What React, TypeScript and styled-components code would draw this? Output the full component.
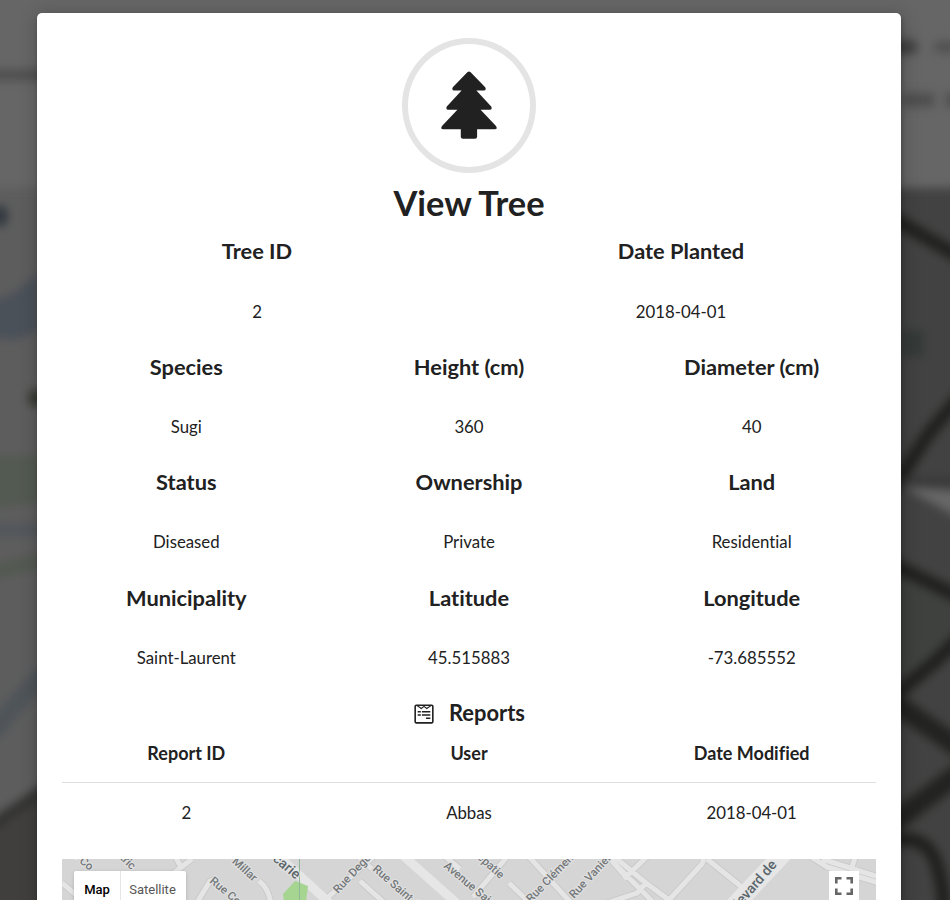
import React from "react";
import styled, { createGlobalStyle } from "styled-components";
import { FaWpforms } from "react-icons/fa";

const GlobalStyle = createGlobalStyle`
  html, body { margin: 0; height: 100%; overflow: hidden; }
  body {
    background: #5c5c5c;
    font-family: Lato, "Liberation Sans", sans-serif;
    font-variant-ligatures: none;
    color: #212121;
  }
  * { box-sizing: border-box; }
`;

const Page = styled.div`
  position: relative;
  width: 950px;
  height: 900px;
  overflow: hidden;
  padding: 13px 0 0 37px;
`;

const Backdrop = styled.svg`
  position: absolute;
  inset: 0;
`;

const Modal = styled.main`
  position: relative;
  width: 864px;
  height: 1000px;
  padding: 25px;
  background: #fff;
  border-radius: 5px;
  box-shadow: 1px 3px 4px rgba(0, 0, 0, 0.2), 1px 3px 18px 2px rgba(0, 0, 0, 0.2);
  display: flex;
  flex-direction: column;
`;

const TreeBadge = styled.div`
  align-self: center;
  flex: none;
  width: 134.4px;
  height: 135px;
  padding-bottom: 1px;
  border: 6px solid #e4e4e4;
  border-radius: 50%;
  display: flex;
  align-items: center;
  justify-content: center;
`;

const Title = styled.h1`
  margin: 0;
  flex: none;
  height: 62px;
  line-height: 60px;
  text-align: center;
  font-size: 34.4px;
  font-weight: 700;
`;

const Row = styled.section<{ $columns: number; $height: number }>`
  display: grid;
  grid-template-columns: repeat(${(p) => p.$columns}, 1fr);
  flex: none;
  height: ${(p) => p.$height}px;
  margin: 0 -17px;
  text-align: center;
`;

const Heading = styled.h2`
  margin: 0;
  height: 34px;
  line-height: 32px;
  font-size: 21.8px;
  font-weight: 700;
`;

const Value = styled.p<{ $gap: number }>`
  margin: ${(p) => p.$gap}px 0 0;
  height: 34px;
  line-height: 34px;
  font-size: 16.8px;
`;

const ReportsTitle = styled.h2`
  margin: 0;
  height: 34px;
  flex: none;
  display: flex;
  align-items: center;
  justify-content: center;
  gap: 14px;
  line-height: 26px;
  font-size: 21.9px;
  font-weight: 700;
  span { padding-bottom: 2px; }
`;

const ReportRow = styled(Row)`
  align-items: center;
  font-size: 16.8px;
`;

const ReportHead = styled(ReportRow)`
  font-size: 18px;
  font-weight: 700;
`;

const Divider = styled.hr`
  width: 100%;
  margin: 7px 0 0;
  border: 0;
  border-top: 1px solid #dedede;
`;

const MapPanel = styled.div`
  position: relative;
  flex: none;
  height: 150px;
  margin-top: 17px;
  background: #d5d5d5;
  overflow: hidden;
`;

const MapTypes = styled.div`
  position: absolute;
  left: 12px;
  top: 12px;
  display: flex;
  height: 36px;
  background: #fff;
  border-radius: 2px;
  box-shadow: 0 1px 4px -1px rgba(0, 0, 0, 0.3);
`;

const MapType = styled.button<{ $active?: boolean }>`
  width: ${(p) => (p.$active ? 46 : 66)}px;
  padding: 0 ${(p) => (p.$active ? 0 : 2)}px 0 0;
  border: 0;
  border-left: ${(p) => (p.$active ? "0" : "1px solid #e6e6e6")};
  background: transparent;
  color: ${(p) => (p.$active ? "#000" : "#565656")};
  font: ${(p) => (p.$active ? 500 : 400)} 13px Roboto, sans-serif;
`;

const Fullscreen = styled.button`
  position: absolute;
  right: 17px;
  top: 12px;
  width: 30px;
  height: 30px;
  padding: 6px;
  border: 0;
  background: #fff;
  svg { display: block; }
`;

const rows: [string, string][][] = [
  [["Tree ID", "2"], ["Date Planted", "2018-04-01"]],
  [["Species", "Sugi"], ["Height (cm)", "360"], ["Diameter (cm)", "40"]],
  [["Status", "Diseased"], ["Ownership", "Private"], ["Land", "Residential"]],
  [["Municipality", "Saint-Laurent"], ["Latitude", "45.515883"], ["Longitude", "-73.685552"]],
];
const rowHeights = [116, 115, 116, 115];

function BlurredPage() {
  return (
    <Backdrop width="950" height="900" viewBox="0 0 950 900">
      <defs>
        <filter id="soft" x="-20%" y="-20%" width="140%" height="140%" colorInterpolationFilters="sRGB">
          <feGaussianBlur stdDeviation="5" />
        </filter>
      </defs>
      <rect width="950" height="900" fill="#666" />
      <g filter="url(#soft)">
        <rect x="-30" y="188" width="500" height="750" fill="#5d5d5d" />
        <rect x="480" y="188" width="500" height="750" fill="#424242" />
        <path d="M-20 75H60" stroke="#4d4d4d" strokeWidth="10" />
        <ellipse cx="0" cy="216" rx="8" ry="11" fill="#30383f" />
        <path d="M-20 305L10 295L40 272V330L18 340L-20 338Z" fill="#4b5159" />
        <circle cx="37" cy="398" r="9" fill="#34382f" />
        <path d="M-20 458L45 454V502L-20 510Z" fill="#535a51" />
        <path d="M-20 530H45" stroke="#52565b" strokeWidth="12" />
        <path d="M-20 575L45 560" stroke="#535951" strokeWidth="16" />
        <path d="M45 672L15 705L-10 735" stroke="#4e5459" strokeWidth="18" fill="none" />
        <path d="M-30 842L50 785V930H-30Z" fill="#403f3e" />
        <path d="M-20 833L50 785" stroke="#30302f" strokeWidth="10" />
        <ellipse cx="905" cy="47" rx="13" ry="8" fill="#404040" />
        <ellipse cx="946" cy="47" rx="13" ry="6" fill="#505050" />
        <path d="M902 100H934M946 100H965" stroke="#4e4e4e" strokeWidth="14" />
        <rect x="901" y="330" width="23" height="27" fill="#343a37" />
        <path d="M895 566L970 600V650L895 675Z" fill="#3e413d" />
        <path d="M880 211L970 263M970 385L930 432L890 492M880 558L970 602M970 628L935 662L895 695M895 840Q925 835 935 860T945 930" stroke="#1f1f1d" strokeWidth="13" fill="none" />
        <path d="M890 700L970 755M970 765L930 795L890 825" stroke="#222220" strokeWidth="20" fill="none" />
        <path d="M890 481H970" stroke="#333" strokeWidth="5" />
        <path d="M903 487L970 492V524Z" fill="#676767" />
      </g>
    </Backdrop>
  );
}

function TreeIcon() {
  return (
    <svg width="56" height="68" viewBox="0 0 56 68" fill="#212121">
      <path d="M26.6 1Q28 -.2 29.4 1L44.2 16.2Q45.8 19.6 42.5 19.6H35.4L50.2 35.5Q51.7 38.8 48.5 38.8H39.6L55 54.9Q57 58.2 53.7 58.2H36.1V65.7Q36.1 67.8 34 67.8H21.9Q19.8 67.8 19.8 65.7V58.2H2.3Q-1 58.2 1 54.9L16.4 38.8H7.5Q4.3 38.8 5.8 35.5L20.6 19.6H13.5Q10.2 19.6 11.8 16.2Z" />
    </svg>
  );
}

const roads =
  "M0 24L20 41M67 48L130 0M110 -8L119 8M125 60L148 22L154 20M197 22Q208 30 209 48M265 39L320 -10M298 22L327 48M310 10L290 -8M362 -20L398 10M411 38L450 -8M447 24L472 48M460 -10L510 45M538 -10L590 42M544 -5L564 18M562 20L601 -18M508 -20L530 -5M584 24L549 -5M584 24L607 41L640 5Q643 0 638 -6M584 24L575 34L545 44M645 0L681 29M746 -4L765 8L820 25M760 0L820 19M790 8L795 -7";

const streets: [number, number, number, string][] = [
  [5, -7, 40, "ue Co"],
  [53, -5, 45, "atric"],
  [163, -3, 43, "e Millar"],
  [147, 23, 40, "Rue Cous"],
  [276, 35, -47, "Rue Degui"],
  [310, 11, 41, "Rue Saint-G"],
  [381, 8, 40, "Avenue Saint"],
  [409, -6, 42, "Depatie"],
  [469, 44, -46, "Rue Clément"],
  [512, 40, -47, "Rue Vanier"],
];

function MapDrawing() {
  return (
    <svg width="814" height="60" viewBox="0 0 814 60">
      <g fill="none" strokeLinejoin="round">
        <path d={roads} stroke="#cacaca" strokeWidth="7" />
        <path d={roads} stroke="#e5e5e5" strokeWidth="5" />
        <path d="M200 -18L275 51M336 -8L400 49" stroke="#e6e6e6" strokeWidth="9" />
        <path d="M655 65L735 -20" stroke="#e6e6e6" strokeWidth="18" />
      </g>
      <path d="M221 35L233 22L246 27L243 50H223Z" fill="#a5d591" />
      <path d="M237.5 0V60" stroke="#8db795" strokeWidth="1" />
      <g fontFamily="Roboto, sans-serif" fontSize="11.5" fontWeight="500" fill="#74787a" stroke="#e2e2e2" strokeWidth="2" paintOrder="stroke">
        {streets.map(([x, y, angle, name]) => (
          <text key={name} transform={`translate(${x} ${y}) rotate(${angle})`}>{name}</text>
        ))}
      </g>
      <g fontFamily="Roboto, sans-serif" fontSize="14" fontWeight="500" fill="#5b666c" stroke="#e5e5e5" strokeWidth="2" paintOrder="stroke">
        <text transform="translate(210 1) rotate(40)">carie</text>
        <text transform="translate(678 49) rotate(-49)">levard de</text>
      </g>
    </svg>
  );
}

export default function App() {
  return (
    <Page>
      <GlobalStyle />
      <BlurredPage />
      <Modal>
        <TreeBadge><TreeIcon /></TreeBadge>
        <Title>View Tree</Title>
        {rows.map((cells, i) => (
          <Row key={i} $columns={cells.length} $height={rowHeights[i]}>
            {cells.map(([label, value]) => (
              <div key={label}>
                <Heading>{label}</Heading>
                <Value $gap={i === 0 ? 26 : 25}>{value}</Value>
              </div>
            ))}
          </Row>
        ))}
        <ReportsTitle><FaWpforms size={22} /><span>Reports</span></ReportsTitle>
        <ReportHead $columns={3} $height={44}>
          <span>Report ID</span><span>User</span><span>Date Modified</span>
        </ReportHead>
        <Divider />
        <ReportRow $columns={3} $height={59}>
          <span>2</span><span>Abbas</span><span>2018-04-01</span>
        </ReportRow>
        <MapPanel>
          <MapDrawing />
          <MapTypes>
            <MapType $active>Map</MapType>
            <MapType>Satellite</MapType>
          </MapTypes>
          <Fullscreen aria-label="Fullscreen">
            <svg width="18" height="18" viewBox="0 0 18 18" fill="none" stroke="#666" strokeWidth="2.6">
              <path d="M1.3 6.5V1.3H6.5M11.5 1.3H16.7V6.5M16.7 11.5V16.7H11.5M6.5 16.7H1.3V11.5" />
            </svg>
          </Fullscreen>
        </MapPanel>
      </Modal>
    </Page>
  );
}
